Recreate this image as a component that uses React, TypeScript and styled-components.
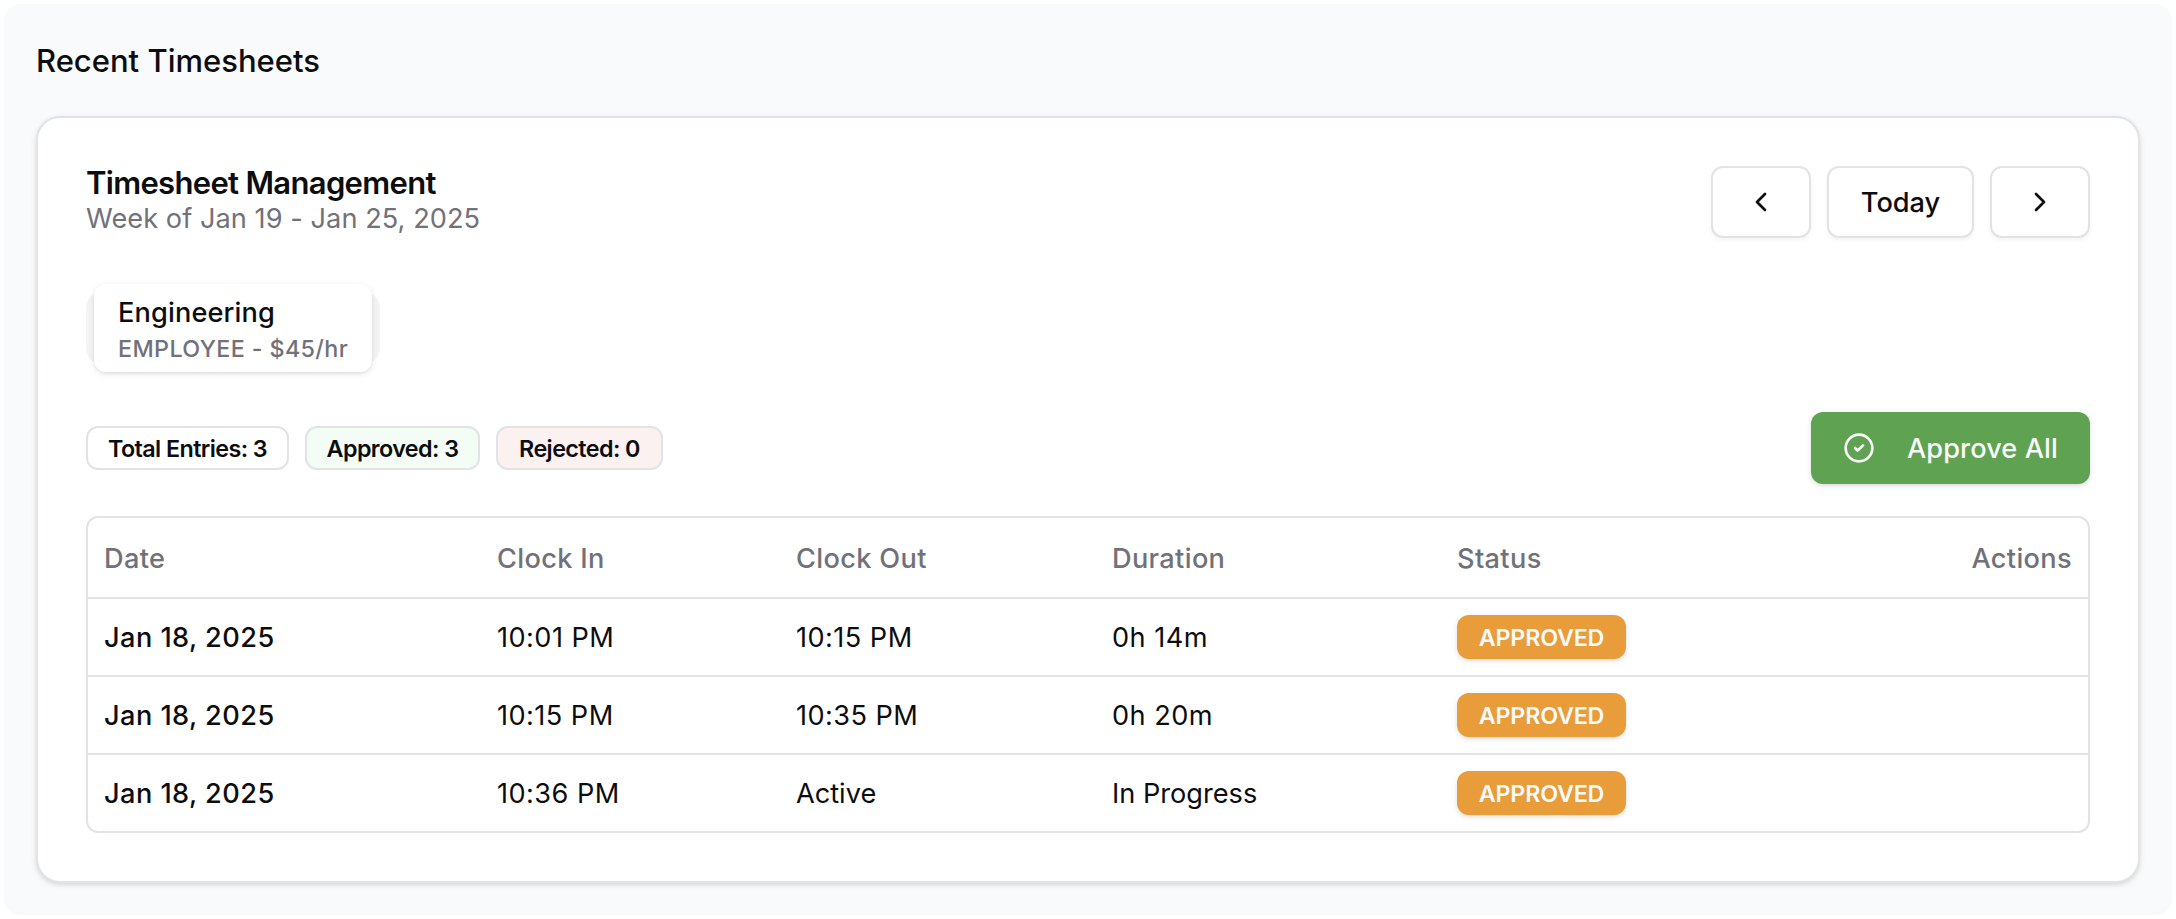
import React from "react";
import styled, { createGlobalStyle } from "styled-components";
import { ChevronLeft, ChevronRight, CircleCheck } from "lucide-react";

const border = "#e3e3e6";
const ink = "#0d0d0f";
const muted = "#71717a";

const GlobalStyle = createGlobalStyle`
  *, *::before, *::after { box-sizing: border-box; }
  body {
    margin: 0;
    background: #fff;
    color: ${ink};
    font-family: Inter, "Liberation Sans", sans-serif;
    font-size: 27.15px;
    line-height: 40px;
    -webkit-font-smoothing: antialiased;
  }
  h2, h3, p { margin: 0; }
  button { font: inherit; letter-spacing: inherit; color: inherit; margin: 0; }
`;

const Page = styled.main`
  height: 919px;
  padding: 4px;
`;

const Panel = styled.section`
  height: 911px;
  padding: 32px;
  border-radius: 16px;
  background: #f8fafc;
`;

const PanelTitle = styled.h2`
  height: 80px;
  padding-top: 1px;
  font-size: 31px;
  font-weight: 500;
  line-height: 48px;
`;

const Card = styled.article`
  height: 767px;
  padding: 48px;
  border: 2px solid ${border};
  border-radius: 24px;
  background: #fff;
  box-shadow: 0 2px 6px rgba(0, 0, 0, 0.1), 0 2px 4px -2px rgba(0, 0, 0, 0.1);
`;

const CardHeader = styled.header`
  display: flex;
  justify-content: space-between;
  height: 72px;
`;

const CardTitle = styled.h3`
  padding-top: 1px;
  font-size: 31px;
  font-weight: 600;
  line-height: 32px;
  letter-spacing: -0.68px;
`;

const Week = styled.p`
  color: ${muted};
  letter-spacing: 0.06px;
`;

const WeekNav = styled.nav`
  display: flex;
  gap: 16px;
`;

const NavButton = styled.button<{ $width: number }>`
  display: flex;
  align-items: center;
  justify-content: center;
  width: ${(p) => p.$width}px;
  height: 72px;
  padding: 0;
  border: 2px solid ${border};
  border-radius: 12px;
  background: #fff;
  font-weight: 500;
  box-shadow: 0 2px 4px rgba(0, 0, 0, 0.05);
`;

const ButtonLabel = styled.span`
  padding-top: 2px;
`;

const TabList = styled.div`
  display: flex;
  align-items: center;
  width: 294px;
  height: 72px;
  margin-top: 54px;
  padding: 8px;
  border-radius: 16px;
  background: #f4f4f5;
`;

const Tab = styled.button`
  width: 278px;
  height: 88px;
  flex: none;
  padding: 9px 24px 7px;
  border: 0;
  border-radius: 12px;
  background: #fff;
  text-align: left;
  white-space: nowrap;
  font-weight: 500;
  box-shadow: 0 2px 6px rgba(0, 0, 0, 0.1), 0 2px 4px -2px rgba(0, 0, 0, 0.1);
`;

const TabName = styled.span`
  display: block;
  letter-spacing: 0.14px;
`;

const TabRole = styled.span`
  display: block;
  color: ${muted};
  font-size: 23.3px;
  line-height: 32px;
  letter-spacing: 0.38px;
`;

const Summary = styled.div`
  display: flex;
  align-items: center;
  justify-content: space-between;
  height: 72px;
  margin-top: 48px;
`;

const Chips = styled.div`
  display: flex;
  gap: 16px;
`;

const Chip = styled.span<{ $width: number; $tone?: string }>`
  display: flex;
  align-items: center;
  justify-content: center;
  width: ${(p) => p.$width}px;
  height: 44px;
  padding-top: 2px;
  border: 2px solid ${border};
  border-radius: 12px;
  background: ${(p) => p.$tone ?? "#fff"};
  font-size: 23.3px;
  font-weight: 600;
  line-height: 32px;
  letter-spacing: -0.57px;
  white-space: nowrap;
`;

const ApproveButton = styled.button`
  display: flex;
  align-items: center;
  gap: 32px;
  width: 279px;
  height: 72px;
  padding: 0 32px;
  border: 0;
  border-radius: 12px;
  background: #5fa352;
  color: #fafafa;
  font-weight: 500;
  letter-spacing: 0.1px;
  white-space: nowrap;
  box-shadow: 0 2px 6px rgba(0, 0, 0, 0.1), 0 2px 4px -2px rgba(0, 0, 0, 0.1);
  svg { flex: none; }
`;

const Table = styled.div`
  margin-top: 32px;
  border: 2px solid ${border};
  border-radius: 12px;
`;

const Row = styled.div<{ $head?: boolean }>`
  display: grid;
  grid-template-columns: 393px 299px 316px 345px 1fr 200px;
  align-items: center;
  height: ${(p) => (p.$head ? 81 : 78)}px;
  padding-top: ${(p) => (p.$head ? 2 : 0)}px;
  border-bottom: 2px solid ${border};
  color: ${(p) => (p.$head ? muted : ink)};
  font-weight: ${(p) => (p.$head ? 500 : 400)};
  letter-spacing: ${(p) => (p.$head ? 0.35 : 0.45)}px;
  &:last-child { height: 76px; border-bottom: 0; }
`;

const Cell = styled.div<{ $strong?: boolean; $end?: boolean; $words?: boolean }>`
  padding: 1px 16px 0;
  font-weight: ${(p) => (p.$strong ? 500 : "inherit")};
  letter-spacing: ${(p) => (p.$words ? "0" : "inherit")};
  text-align: ${(p) => (p.$end ? "right" : "left")};
`;

const StatusCell = styled.div`
  padding: 0 16px;
`;

const Status = styled.span`
  display: flex;
  align-items: center;
  justify-content: center;
  width: 169px;
  height: 44px;
  padding-top: 1px;
  border-radius: 12px;
  background: #e89c3a;
  color: #fafafa;
  font-size: 23.3px;
  font-weight: 600;
  letter-spacing: -0.2px;
  box-shadow: 0 2px 6px rgba(0, 0, 0, 0.1), 0 2px 4px -2px rgba(0, 0, 0, 0.1);
`;

const entries = [
  { date: "Jan 18, 2025", clockIn: "10:01 PM", clockOut: "10:15 PM", duration: "0h 14m" },
  { date: "Jan 18, 2025", clockIn: "10:15 PM", clockOut: "10:35 PM", duration: "0h 20m" },
  { date: "Jan 18, 2025", clockIn: "10:36 PM", clockOut: "Active", duration: "In Progress", open: true },
];

export default function App() {
  return (
    <Page>
      <GlobalStyle />
      <Panel>
        <PanelTitle>Recent Timesheets</PanelTitle>
        <Card>
          <CardHeader>
            <div>
              <CardTitle>Timesheet Management</CardTitle>
              <Week>Week of Jan 19 - Jan 25, 2025</Week>
            </div>
            <WeekNav>
              <NavButton $width={100} aria-label="Previous week"><ChevronLeft size={32} /></NavButton>
              <NavButton $width={147}><ButtonLabel>Today</ButtonLabel></NavButton>
              <NavButton $width={100} aria-label="Next week"><ChevronRight size={32} /></NavButton>
            </WeekNav>
          </CardHeader>
          <TabList>
            <Tab>
              <TabName>Engineering</TabName>
              <TabRole>EMPLOYEE - $45/hr</TabRole>
            </Tab>
          </TabList>
          <Summary>
            <Chips>
              <Chip $width={203}>Total Entries: 3</Chip>
              <Chip $width={175} $tone="#f3fcf5">Approved: 3</Chip>
              <Chip $width={167} $tone="#fbf1f1">Rejected: 0</Chip>
            </Chips>
            <ApproveButton><CircleCheck size={32} /><ButtonLabel>Approve All</ButtonLabel></ApproveButton>
          </Summary>
          <Table>
            <Row $head>
              <Cell>Date</Cell>
              <Cell>Clock In</Cell>
              <Cell>Clock Out</Cell>
              <Cell>Duration</Cell>
              <Cell>Status</Cell>
              <Cell $end>Actions</Cell>
            </Row>
            {entries.map((e) => (
              <Row key={e.clockIn}>
                <Cell $strong>{e.date}</Cell>
                <Cell>{e.clockIn}</Cell>
                <Cell $words={e.open}>{e.clockOut}</Cell>
                <Cell $words={e.open}>{e.duration}</Cell>
                <StatusCell><Status>APPROVED</Status></StatusCell>
                <Cell />
              </Row>
            ))}
          </Table>
        </Card>
      </Panel>
    </Page>
  );
}
